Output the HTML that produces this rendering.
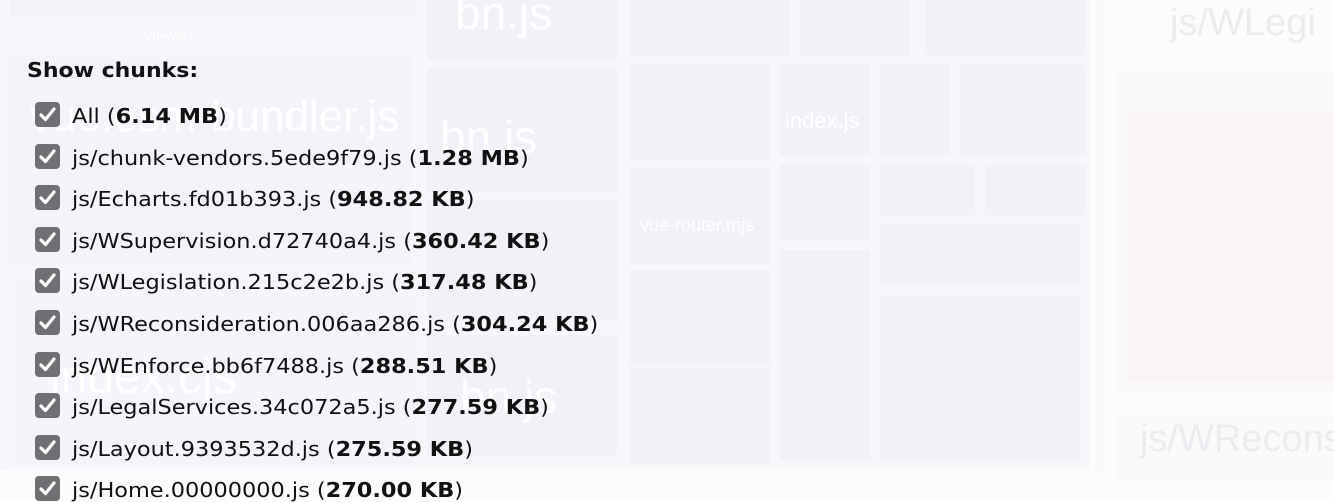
<!DOCTYPE html>
<html><head><meta charset="utf-8"><style>
html,body{margin:0;padding:0;width:1334px;height:483px;overflow:hidden;background:#fcfcfd;font-family:"DejaVu Sans",Verdana,sans-serif;}
.bg{position:absolute;}
.b{position:absolute;background:#f3f3f9;}
.c{position:absolute;background:#f1f1f8;}
.t{position:absolute;color:#ffffff;font-family:"Liberation Sans",sans-serif;white-space:nowrap;}
.gt{position:absolute;color:#ececf0;font-family:"Liberation Sans",sans-serif;white-space:nowrap;}
h4{position:absolute;left:27px;top:58px;margin:0;font-size:20px;font-weight:bold;color:#111;transform:scaleX(1.1);transform-origin:0 0;}
.row{position:absolute;left:35px;height:26px;font-size:20px;color:#111;white-space:nowrap;}
.cb{position:absolute;left:0;top:0;width:25px;height:25px;background:#707074;border-radius:4px;}
.cb svg{position:absolute;left:3px;top:3px;}
.lbl{position:absolute;left:37px;top:2px;transform:scaleX(1.12);transform-origin:0 0;}
</style></head><body>
<div class="bg" style="left:0;top:0;width:420px;height:470px;background:#f7f7fb"></div>
<div class="b" style="left:10px;top:0;width:405px;height:16px;background:#f2f2f8"></div>
<div class="b" style="left:8px;top:25px;width:405px;height:250px;background:#f5f5fa"></div>
<div class="t" style="left:145px;top:28px;font-size:14px">vue/dist</div>
<div class="b" style="left:10px;top:55px;width:400px;height:210px;background:#f3f3f9"></div>
<div class="t" style="left:30px;top:92px;font-size:44px">vue.esm-bundler.js</div>
<div class="b" style="left:10px;top:280px;width:405px;height:185px;background:#f4f4fa"></div>
<div class="t" style="left:50px;top:350px;font-size:48px">index.cjs</div>
<div class="bg" style="left:420px;top:0;width:670px;height:468px;background:#f6f6fb"></div>
<div class="c" style="left:427px;top:0;width:190px;height:60px"></div>
<div class="t" style="left:455px;top:-14px;font-size:46px">bn.js</div>
<div class="c" style="left:630px;top:0;width:160px;height:55px"></div>
<div class="c" style="left:800px;top:0;width:110px;height:55px"></div>
<div class="c" style="left:925px;top:0;width:160px;height:55px"></div>
<div class="c" style="left:427px;top:68px;width:190px;height:125px"></div>
<div class="t" style="left:440px;top:110px;font-size:46px">bn.js</div>
<div class="c" style="left:427px;top:200px;width:190px;height:120px"></div>
<div class="c" style="left:427px;top:335px;width:190px;height:120px"></div>
<div class="t" style="left:460px;top:370px;font-size:46px">bn.js</div>
<div class="c" style="left:630px;top:65px;width:140px;height:95px"></div>
<div class="c" style="left:630px;top:168px;width:140px;height:95px"></div>
<div class="t" style="left:640px;top:215px;font-size:18px">vue-router.mjs</div>
<div class="c" style="left:630px;top:270px;width:140px;height:95px"></div>
<div class="c" style="left:630px;top:368px;width:140px;height:95px"></div>
<div class="c" style="left:780px;top:65px;width:90px;height:90px"></div>
<div class="t" style="left:785px;top:108px;font-size:22px">index.js</div>
<div class="c" style="left:880px;top:65px;width:70px;height:90px"></div>
<div class="c" style="left:960px;top:65px;width:125px;height:90px"></div>
<div class="c" style="left:780px;top:165px;width:90px;height:75px"></div>
<div class="c" style="left:880px;top:165px;width:95px;height:50px"></div>
<div class="c" style="left:985px;top:165px;width:100px;height:50px"></div>
<div class="c" style="left:780px;top:250px;width:90px;height:210px"></div>
<div class="c" style="left:880px;top:225px;width:200px;height:60px"></div>
<div class="c" style="left:880px;top:295px;width:200px;height:165px"></div>
<div class="bg" style="left:1095px;top:0;width:8px;height:470px;background:#f9f9fb"></div>
<div class="gt" style="left:1170px;top:2px;font-size:38px">js/WLegi</div>
<div class="bg" style="left:1115px;top:65px;width:219px;height:330px;background:#fbfafa"></div>
<div class="bg" style="left:1128px;top:112px;width:206px;height:270px;background:#f9f5f4"></div>
<div class="bg" style="left:1115px;top:410px;width:219px;height:73px;background:#fafafb"></div>
<div class="gt" style="left:1140px;top:418px;font-size:38px">js/WRecons</div>

<h4>Show chunks:</h4>
<div id="rows"></div>
<script>
var items=[["All","6.14 MB"],["js/chunk-vendors.5ede9f79.js","1.28 MB"],["js/Echarts.fd01b393.js","948.82 KB"],["js/WSupervision.d72740a4.js","360.42 KB"],["js/WLegislation.215c2e2b.js","317.48 KB"],["js/WReconsideration.006aa286.js","304.24 KB"],["js/WEnforce.bb6f7488.js","288.51 KB"],["js/LegalServices.34c072a5.js","277.59 KB"],["js/Layout.9393532d.js","275.59 KB"],["js/Home.00000000.js","270.00 KB"]];
var h="";
items.forEach(function(it,i){var top=102+i*41.6;
h+='<div class="row" style="top:'+top+'px"><div class="cb"><svg width="19" height="19" viewBox="0 0 19 19"><path d="M3 10 L7.5 14.5 L16 4" stroke="#fff" stroke-width="3.2" fill="none" stroke-linecap="round" stroke-linejoin="round"/></svg></div><span class="lbl">'+it[0]+' (<b>'+it[1]+'</b>)</span></div>';});
document.getElementById("rows").innerHTML=h;
</script>
</body></html>
